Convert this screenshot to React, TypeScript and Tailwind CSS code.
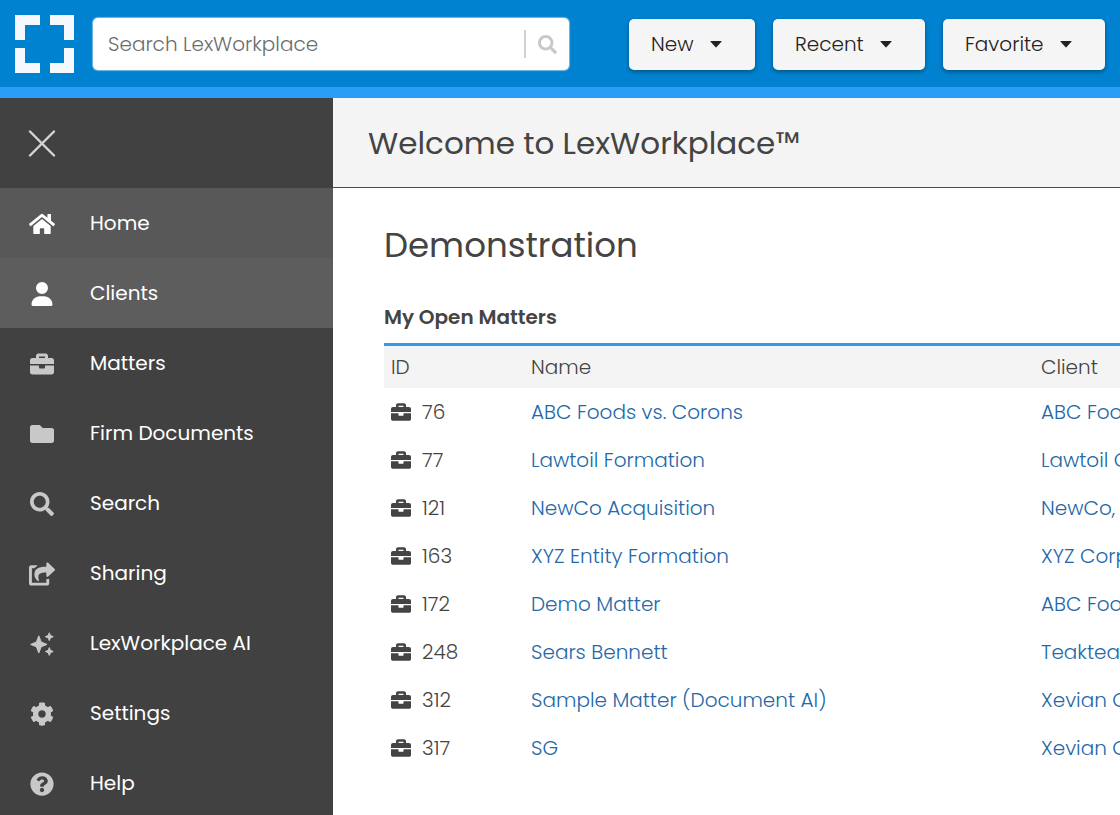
import React from "react";
import { FaBriefcase, FaCog, FaFolder, FaHome, FaQuestionCircle, FaSearch, FaShareSquare } from "react-icons/fa";
import { FaUser } from "react-icons/fa6";

type IconType = React.ComponentType<{ className?: string }>;

function Sparkles({ className }: { className?: string }) {
  return (
    <svg viewBox="0 0 24 24" fill="currentColor" stroke="currentColor" strokeWidth="1" strokeLinejoin="round" className={className} aria-hidden="true">
      <path d="M8.800 3.800L11.200 10L17 12.400L11.200 14.800L8.800 21L6.400 14.800L0.600 12.400L6.400 10z" />
      <path d="M19.300 0.800L20.400 3.500L23.200 4.700L20.400 5.900L19.300 8.600L18.200 5.900L15.400 4.700L18.200 3.500z" />
      <path d="M19.300 15.600L20.400 18.300L23.200 19.500L20.400 20.700L19.300 23.400L18.200 20.700L15.400 19.500L18.200 18.300z" />
    </svg>
  );
}

function Logo() {
  return (
    <svg viewBox="0 0 60 58" className="h-[58px] w-[60px] shrink-0" fill="none" stroke="#f5f9fd" strokeWidth="10" role="img" aria-label="LexWorkplace">
      <path d="M5 25V5h20M35 5h19v20M54 33v20H35M25 53H5V33" />
    </svg>
  );
}

const navItems: { label: string; icon: IconType; look: string; size: string }[] = [
  { label: "Home", icon: FaHome, look: "bg-[#585858] text-white", size: "size-[26px]" },
  { label: "Clients", icon: FaUser, look: "bg-[#5d5d5d] text-white", size: "size-6" },
  { label: "Matters", icon: FaBriefcase, look: "text-[#c8c8c8]", size: "size-6" },
  { label: "Firm Documents", icon: FaFolder, look: "text-[#c8c8c8]", size: "size-6" },
  { label: "Search", icon: FaSearch, look: "text-[#c8c8c8]", size: "size-6" },
  { label: "Sharing", icon: FaShareSquare, look: "text-[#c8c8c8]", size: "size-[26px]" },
  { label: "LexWorkplace AI", icon: Sparkles, look: "text-[#c8c8c8]", size: "size-6" },
  { label: "Settings", icon: FaCog, look: "text-[#c8c8c8]", size: "size-6" },
  { label: "Help", icon: FaQuestionCircle, look: "text-[#c8c8c8]", size: "size-6" },
];

const matters = [
  { id: 76, name: "ABC Foods vs. Corons", client: "ABC Foods" },
  { id: 77, name: "Lawtoil Formation", client: "Lawtoil Corp" },
  { id: 121, name: "NewCo Acquisition", client: "NewCo, Inc." },
  { id: 163, name: "XYZ Entity Formation", client: "XYZ Corp" },
  { id: 172, name: "Demo Matter", client: "ABC Foods" },
  { id: 248, name: "Sears Bennett", client: "Teakteam" },
  { id: 312, name: "Sample Matter (Document AI)", client: "Xevian Corp" },
  { id: 317, name: "SG", client: "Xevian Corp" },
];

export default function App() {
  return (
    <div className="flex h-screen flex-col overflow-hidden bg-white font-[Poppins,Inter,sans-serif] text-[20px] leading-[30px] font-light text-[#444]">
      <header className="flex shrink-0 items-center border-b-[11px] border-[#299df8] bg-[#0082d0] px-[15px] pt-[15px] pb-[14px]">
        <Logo />
        <form role="search" className="ml-[18px] flex h-[52px] w-[476px] shrink-0 items-center rounded-[5px] bg-white shadow-[0_0_1px_1px_#7ab8de]">
          <input type="search" aria-label="Search LexWorkplace" placeholder="Search LexWorkplace" className="h-full min-w-0 flex-1 bg-transparent pl-[15px] outline-none placeholder:text-[#6c6c6c]" />
          <button type="button" aria-label="Search" className="flex h-7 items-center border-l-2 border-[#d0d0d0] px-3 text-[#c8c8c8]">
            <FaSearch className="size-[19px]" />
          </button>
        </form>
        <div className="ml-auto flex shrink-0 gap-[18px]">
          {[
            { label: "New", width: "w-[126px]" },
            { label: "Recent", width: "w-[152px]" },
            { label: "Favorite", width: "w-[162px]" },
          ].map((b) => (
            <button key={b.label} type="button" className={`flex h-[51px] items-center justify-between rounded-[5px] bg-[#f5f5f5] pr-[33px] pl-[22px] text-[#222] shadow-[0_2px_4px_rgba(0,0,0,0.35)] ${b.width}`}>
              {b.label}
              <svg viewBox="0 0 12 7" className="mt-px h-[7px] w-3" fill="currentColor" aria-hidden="true">
                <path d="M1 0h10q1 0 .4.800L6.600 6.100q-.6.600-1.200 0L.6.800Q0 0 1 0z" />
              </svg>
            </button>
          ))}
        </div>
      </header>
      <div className="flex min-h-0 flex-1">
        <aside className="w-[333px] shrink-0 overflow-hidden bg-[#414141]">
          <div className="flex h-[90px] items-center pl-7">
            <button type="button" aria-label="Close menu" className="text-[#d5d5d5]">
              <svg viewBox="0 0 28 28" className="size-7" fill="none" stroke="currentColor" strokeWidth="2.400" strokeLinecap="round">
                <path d="M2 2.500l24 24M26 2.500L2 26.500" />
              </svg>
            </button>
          </div>
          <nav>
            {navItems.map(({ label, icon: Icon, look, size }) => (
              <a key={label} href="#" className={`flex h-[70px] items-center ${look}`}>
                <span className="flex w-[83px] justify-center pt-[2px]">
                  <Icon className={size} />
                </span>
                <span className="pl-[7px] font-normal text-white">{label}</span>
              </a>
            ))}
          </nav>
        </aside>
        <main className="min-w-0 flex-1 overflow-hidden">
          <div className="flex h-[90px] items-center border-b border-[#4a4a4a] bg-[#f4f4f4] pl-[35px]">
            <h1 className="text-[31px] font-normal">Welcome to LexWorkplace™</h1>
          </div>
          <section className="pt-[34px] pl-[51px]">
            <h2 className="text-[34px] leading-[46px] font-normal">Demonstration</h2>
            <h3 className="mt-[34px] font-semibold">My Open Matters</h3>
            <table className="mt-[11px] w-[860px] table-fixed border-collapse border-t-3 border-[#3597e6] text-left">
              <thead>
                <tr className="h-[43px] bg-[#f4f4f4]">
                  <th className="w-[140px] pl-[7px] font-light">ID</th>
                  <th className="w-[510px] pl-[7px] font-light">Name</th>
                  <th className="pl-[7px] font-light">Client</th>
                </tr>
              </thead>
              <tbody>
                {matters.map((m) => (
                  <tr key={m.id} className="h-12">
                    <td className="pl-[7px]">
                      <span className="flex items-center gap-[11px]">
                        <FaBriefcase className="size-5" />
                        {m.id}
                      </span>
                    </td>
                    <td className="pl-[7px]"><a href="#" className="text-[#2468a8]">{m.name}</a></td>
                    <td className="pl-[7px]"><a href="#" className="text-[#2468a8]">{m.client}</a></td>
                  </tr>
                ))}
              </tbody>
            </table>
          </section>
        </main>
      </div>
    </div>
  );
}
